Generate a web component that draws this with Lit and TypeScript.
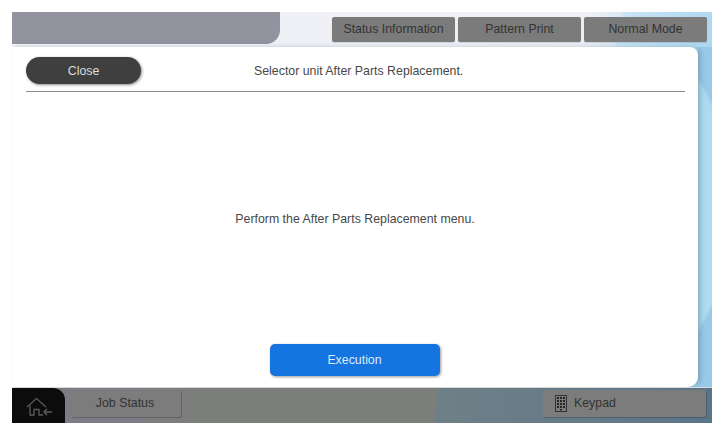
import { LitElement, html, svg, css } from "lit";
import { customElement } from "lit/decorators.js";

@customElement("app-root")
export class AppRoot extends LitElement {
  static styles = css`
    :host {
      display: block;
      width: 724px;
      height: 434px;
      background: #fff;
      font-family: "Liberation Sans", Arial, sans-serif;
      font-size: 12.35px;
      color: #484848;
      padding: 12px 12px 11px;
      box-sizing: border-box;
    }
    .screen {
      height: 411px;
      display: flex;
      flex-direction: column;
      background:
        radial-gradient(ellipse 725px 400px at -686px 158px, rgba(196, 236, 246, 0.5) 99.5%, transparent 100%) right 0 top 35px / 14px 340px no-repeat,
        linear-gradient(90deg, transparent 686px, #98c9e8 686px, #98c9e8 700px) 0 35px / 100% 340px no-repeat,
        linear-gradient(104deg, #f1f1f6 0, #eef0f6 72%, #dbe8f5 76%, #c8e3f5 76.4%, #a6d4ef 92%, #9fcfec 100%);
    }
    .top {
      height: 35px;
      display: flex;
      align-items: flex-start;
      flex: none;
    }
    .brand {
      width: 268px;
      height: 32px;
      flex: none;
      background: #93929f;
      border-bottom-right-radius: 14px;
    }
    .tabs {
      margin: 5px 0 0 52px;
      display: flex;
      gap: 3px;
    }
    .tab {
      width: 123px;
      height: 25px;
      padding-bottom: 1px;
      box-sizing: border-box;
      background: #7b7b7b;
      border-radius: 2px;
      display: flex;
      align-items: center;
      justify-content: center;
      color: #333;
      box-shadow: 0 1px 1px rgba(0, 0, 0, 0.12);
    }
    .panel {
      width: 686px;
      height: 340px;
      flex: none;
      box-sizing: border-box;
      background: #fff;
      border-radius: 0 8px 10px 0;
      padding: 10px 13px 10px 14px;
      display: flex;
      flex-direction: column;
      box-shadow: 3px 0 4px rgba(40, 70, 90, 0.25);
    }
    .head {
      display: flex;
      align-items: center;
      height: 27px;
      flex: none;
    }
    .close {
      width: 115px;
      height: 27px;
      box-sizing: border-box;
      border-radius: 14px;
      background: #3f3f3f;
      color: #ddd;
      display: flex;
      align-items: center;
      justify-content: center;
      box-shadow: 1px 1px 3px rgba(0, 0, 0, 0.45);
      flex: none;
    }
    .title {
      margin-left: 113px;
      white-space: nowrap;
    }
    .rule {
      height: 1px;
      background: #8a8a8a;
      margin-top: 7px;
      flex: none;
    }
    .msg {
      flex: 1;
      display: flex;
      align-items: center;
      justify-content: center;
      margin-left: -1px;
      padding-top: 1px;
    }
    .exec {
      align-self: center;
      width: 170px;
      height: 32px;
      padding-bottom: 1px;
      box-sizing: border-box;
      margin: 0 0 1px -2px;
      border-radius: 5px;
      background: #1474e0;
      color: #dfebfa;
      display: flex;
      align-items: center;
      justify-content: center;
      box-shadow: 1px 1px 3px rgba(0, 0, 0, 0.4);
      flex: none;
    }
    .bottom {
      flex: 1;
      display: flex;
      align-items: flex-start;
      border-top: 1px solid #d8d8d8;
      background:
        linear-gradient(90deg, #7c7c84 131px, transparent 131px),
        radial-gradient(ellipse 426px 300px at 0 0, #7c7e7c 99.6%, transparent 100%),
        linear-gradient(90deg, #6f7f86 0, #6f7f86 60%, #647a88 85%, #5a7488 100%);
    }
    .home {
      width: 53px;
      height: 35px;
      flex: none;
      background: #0c0c0c;
      border-top-right-radius: 12px;
      display: flex;
      align-items: center;
      justify-content: center;
    }
    .home svg {
      margin-top: 3px;
    }
    .btn {
      height: 27px;
      margin-top: 2px;
      padding-bottom: 1px;
      background: #7c7c7c;
      border-radius: 2px;
      display: flex;
      align-items: center;
      color: #333;
      box-shadow: 1px 1px 1px rgba(0, 0, 0, 0.22);
      box-sizing: border-box;
    }
    .job {
      width: 110px;
      margin-left: 6px;
      padding-right: 2px;
      justify-content: center;
    }
    .keypad {
      width: 163px;
      margin-left: auto;
      margin-right: 6px;
      padding-left: 12px;
      gap: 7px;
    }
  `;

  render() {
    const cells = [2, 5, 8, 11].flatMap((y) =>
      [2, 5, 8].map((x) => svg`<rect x="${x}" y="${y}" width="2" height="2" fill="#262626" />`)
    );
    return html`
      <div class="screen">
        <div class="top">
          <div class="brand"></div>
          <div class="tabs">
            <div class="tab">Status Information</div>
            <div class="tab">Pattern Print</div>
            <div class="tab">Normal Mode</div>
          </div>
        </div>
        <div class="panel">
          <div class="head">
            <div class="close">Close</div>
            <div class="title">Selector unit After Parts Replacement.</div>
          </div>
          <div class="rule"></div>
          <div class="msg">Perform the After Parts Replacement menu.</div>
          <div class="exec">Execution</div>
        </div>
        <div class="bottom">
          <div class="home">
            <svg width="28" height="20" viewBox="0 0 28 20" fill="none" stroke="#5a5a5a" stroke-width="1.3">
              <path d="M2 10 L11.5 1.5 L21 10" />
              <path d="M5 8.5 V18 H9 V12.5 H14 V18 H18" />
              <path d="M27 15 H19 M22 12 L19 15 L22 18" stroke-width="1.5" />
            </svg>
          </div>
          <div class="btn job">Job Status</div>
          <div class="btn keypad">
            <svg width="12" height="17" viewBox="0 0 12 17">
              <rect x="0.5" y="0.5" width="11" height="16" fill="none" stroke="#333" />
              ${cells}
              <rect x="5" y="14" width="2" height="1.5" fill="#262626" />
            </svg>
            Keypad
          </div>
        </div>
      </div>
    `;
  }
}
